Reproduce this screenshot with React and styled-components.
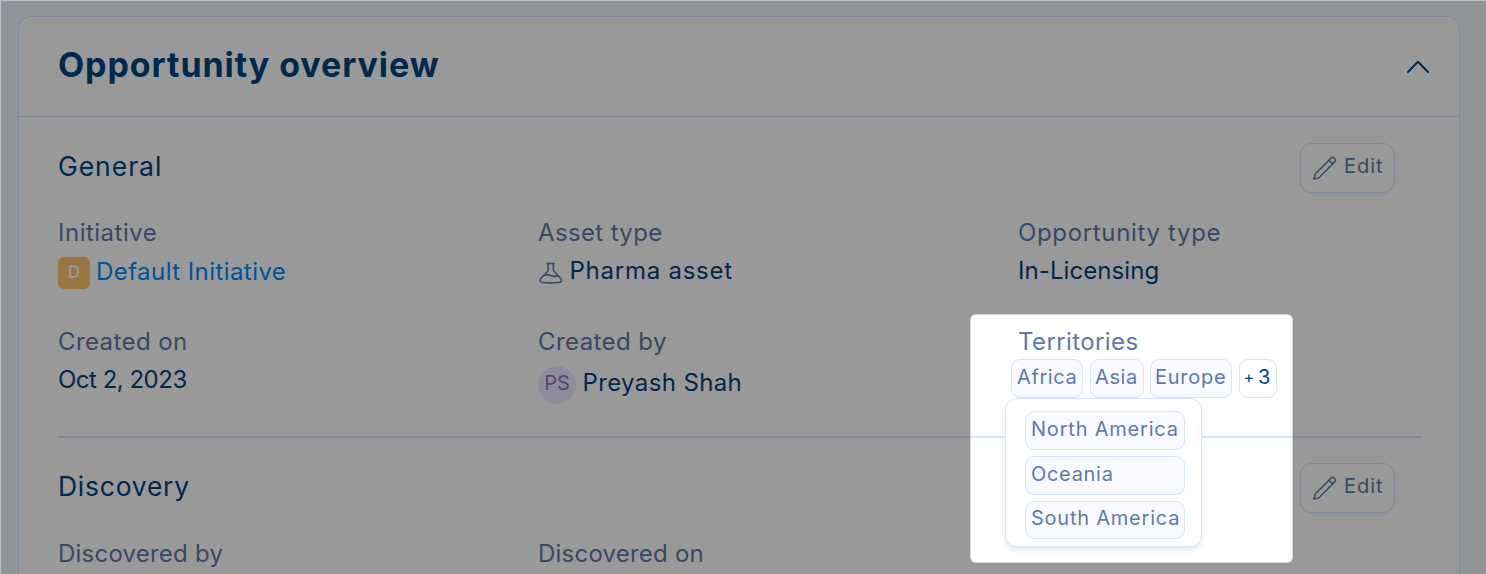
import React from "react";
import styled, { createGlobalStyle } from "styled-components";

const Global = createGlobalStyle`
  * { box-sizing: border-box; }
  body { margin: 0; overflow: hidden; font-family: Inter, "Liberation Sans", sans-serif; }
`;

const navy = "#004580";
const slate = "#5f7aa9";
const line = "#d6e4ff";

const Page = styled.main`
  position: relative;
  width: 1486px;
  height: 574px;
  overflow: hidden;
  padding: 16px 26px 0 18px;
  background: #f2f9ff;
`;

const Card = styled.section`
  height: 640px;
  border: 1px solid ${line};
  border-radius: 13px;
  background: #fff;
`;

const CardHeader = styled.header`
  display: flex;
  align-items: center;
  justify-content: space-between;
  height: 100px;
  padding: 0 29px 0 39px;
  border-bottom: 1px solid ${line};
`;

const Title = styled.h1`
  margin: 0;
  padding-bottom: 4px;
  font-size: 34px;
  line-height: 40px;
  font-weight: 700;
  letter-spacing: ${(p) => p.$track || 0}px;
  color: ${navy};
  white-space: nowrap;
`;

const CardBody = styled.div`
  padding: 26px 38px 0 39px;
`;

const SectionHeader = styled.div`
  display: flex;
  align-items: center;
  justify-content: space-between;
  height: 50px;
  padding-right: 26px;
`;

const SectionTitle = styled.h2`
  margin: 0;
  padding-bottom: 4px;
  font-size: 26.5px;
  line-height: 34px;
  font-weight: 400;
  letter-spacing: ${(p) => p.$track || 0}px;
  color: ${navy};
`;

const EditButton = styled.button`
  display: flex;
  align-items: center;
  width: 95px;
  height: 50px;
  padding: 0 0 0 11px;
  gap: 7px;
  border: 1px solid ${line};
  border-radius: 12px;
  background: #fff;
  box-shadow: 0 1px 2px rgba(95, 122, 169, 0.08);
  font: 400 20px/24px Inter, sans-serif;
  color: ${slate};
`;

const ButtonText = styled.span`
  padding-bottom: 4px;
  letter-spacing: ${(p) => p.$track || 0}px;
`;

const Fields = styled.div`
  display: grid;
  grid-template-columns: 480px 480px 1fr;
  grid-auto-rows: 109px;
  margin-top: ${(p) => p.$top}px;
  height: ${(p) => p.$height}px;
`;

const Label = styled.div`
  height: 38px;
  font-size: 24px;
  line-height: 30px;
  letter-spacing: ${(p) => p.$track || 0}px;
  color: ${slate};
  white-space: nowrap;
`;

const Value = styled.div`
  display: flex;
  align-items: flex-start;
  gap: ${(p) => p.$gap || 0}px;
  margin-top: ${(p) => p.$drop || 0}px;
  font-size: 24px;
  line-height: 30px;
  color: ${(p) => (p.$link ? "#008cff" : navy)};
  white-space: nowrap;
`;

const Text = styled.span`
  letter-spacing: ${(p) => p.$track || 0}px;
`;

const Badge = styled.span`
  display: flex;
  align-items: center;
  justify-content: center;
  width: 32px;
  height: 32px;
  padding-bottom: 2px;
  border-radius: 6px;
  background: #ffc36b;
  color: #fff;
  font-size: 17px;
  font-weight: 600;
`;

const Avatar = styled.span`
  display: flex;
  align-items: center;
  justify-content: center;
  width: 38px;
  height: 38px;
  margin-top: -2px;
  padding-bottom: 4px;
  border-radius: 50%;
  background: #eeeaff;
  color: #9370cc;
  font-size: 20px;
`;

const Chips = styled.div`
  display: flex;
  gap: 6.5px;
  margin: -6px 0 0 -7px;
`;

const Chip = styled.div`
  flex: none;
  width: ${(p) => (p.$width ? p.$width + "px" : "auto")};
  height: ${(p) => p.$height || 39}px;
  padding-left: ${(p) => p.$pad || 5}px;
  border: 1px solid ${line};
  border-radius: 9px;
  background: ${(p) => (p.$more ? "#fff" : "#f8faff")};
  color: ${(p) => (p.$more ? navy : slate)};
  font-size: 20px;
  line-height: ${(p) => (p.$height ? 32 : 34)}px;
  letter-spacing: ${(p) => p.$track || 0}px;
  white-space: nowrap;
`;

const Plus = styled.span`
  display: inline-block;
  margin-right: 4px;
  font-size: 16px;
  line-height: 1;
  vertical-align: 1px;
`;

const Divider = styled.hr`
  height: 2px;
  margin: 0 0 25px;
  border: 0;
  background: ${line};
`;

const Menu = styled.div`
  position: absolute;
  left: 1005px;
  top: 398px;
  width: 197px;
  height: 149px;
  display: flex;
  flex-direction: column;
  gap: 6px;
  padding: 12px 16px 0 19px;
  border: 1px solid ${line};
  border-radius: 12px;
  background: #fff;
  box-shadow: 0 3px 5px rgba(95, 122, 169, 0.16);
`;

const Spotlight = styled.div`
  position: absolute;
  left: 970px;
  top: 314px;
  width: 323px;
  height: 249px;
  border: 1px solid rgba(0, 0, 0, 0.15);
  border-radius: 6px;
  box-shadow: 0 0 0 2000px rgba(0, 0, 0, 0.4);
  pointer-events: none;
`;

const Edge = styled.div`
  position: absolute;
  inset: 0;
  border: solid #bcc3c9;
  border-width: 1px 0 0 1px;
  pointer-events: none;
`;

const FlaskIcon = styled.svg`
  margin-top: 5px;
`;

const Pencil = () => (
  <svg width="25" height="25" viewBox="0 0 25 25" fill="none" stroke="currentColor" strokeWidth="1.6" strokeLinejoin="round" strokeLinecap="round">
    <path d="M1.900 23.200 3 18.700Q3.200 18 3.700 17.500L18.900 2.300a2.500 2.500 0 0 1 3.700 3.700L7.400 21.200Q6.900 21.700 6.200 21.900Z" />
    <path d="m17 4.200 3.700 3.700" />
  </svg>
);

const Flask = () => (
  <FlaskIcon width="25" height="25" viewBox="0 0 25 25" fill="none" stroke={slate} strokeWidth="1.6" strokeLinecap="round" strokeLinejoin="round">
    <path d="M9.300 2.500h7M10.200 2.500v6c0 1.100-.6 2-1.600 3L3 17.300c-2 2.100-1.200 3.900 2 4.200 5 .5 10.500.5 15.500 0 3.200-.3 4-2.100 2-4.200L17 11.500c-1-1-1.600-1.900-1.600-3v-6" />
    <path d="M6.300 14.200c2.200-1 4.200-.6 6.300.3 2.300 1 4.400 1.300 7.100.3" />
  </FlaskIcon>
);

const Chevron = () => (
  <svg width="24" height="16" viewBox="0 0 24 16" fill="none" stroke={navy} strokeWidth="2" strokeLinecap="round" strokeLinejoin="round">
    <path d="M2 13 12 2.800 22 13" />
  </svg>
);

const Edit = () => (
  <EditButton>
    <Pencil />
    <ButtonText $track={0.95}>Edit</ButtonText>
  </EditButton>
);

export default function App() {
  return (
    <>
      <Global />
      <Page>
        <Card>
          <CardHeader>
            <Title $track={0.92}>Opportunity overview</Title>
            <Chevron />
          </CardHeader>
          <CardBody>
            <SectionHeader>
              <SectionTitle $track={0.95}>General</SectionTitle>
              <Edit />
            </SectionHeader>
            <Fields $height={218} $top={25}>
              <div>
                <Label $track={0.5}>Initiative</Label>
                <Value $link $gap={6} $drop={1}>
                  <Badge>D</Badge>
                  <Text $track={0.43}>Default Initiative</Text>
                </Value>
              </div>
              <div>
                <Label $track={0.36}>Asset type</Label>
                <Value $gap={6.5}>
                  <Flask />
                  <Text $track={0.75}>Pharma asset</Text>
                </Value>
              </div>
              <div>
                <Label $track={0.66}>Opportunity type</Label>
                <Value><Text $track={0.08}>In-Licensing</Text></Value>
              </div>
              <div>
                <Label $track={0.4}>Created on</Label>
                <Value><Text $track={-0.5}>Oct 2, 2023</Text></Value>
              </div>
              <div>
                <Label $track={0.42}>Created by</Label>
                <Value $gap={6.5} $drop={3}>
                  <Avatar>PS</Avatar>
                  <Text $track={0.37}>Preyash Shah</Text>
                </Value>
              </div>
              <div>
                <Label $track={0.4}>Territories</Label>
                <Chips>
                  <Chip $width={72} $track={0.6}>Africa</Chip>
                  <Chip $width={54} $pad={4.5} $track={0.6}>Asia</Chip>
                  <Chip $width={82} $pad={4} $track={0.75}>Europe</Chip>
                  <Chip $width={38} $pad={4} $more><Plus>+</Plus>3</Chip>
                </Chips>
              </div>
            </Fields>
            <Divider />
            <SectionHeader>
              <SectionTitle $track={0.75}>Discovery</SectionTitle>
              <Edit />
            </SectionHeader>
            <Fields $height={109} $top={26}>
              <Label $track={0.22}>Discovered by</Label>
              <Label $track={0.22}>Discovered on</Label>
            </Fields>
          </CardBody>
        </Card>
        <Menu>
          <Chip $track={0.8}>North America</Chip>
          <Chip $track={0.7}>Oceania</Chip>
          <Chip $height={38} $track={0.77}>South America</Chip>
        </Menu>
        <Spotlight />
        <Edge />
      </Page>
    </>
  );
}
